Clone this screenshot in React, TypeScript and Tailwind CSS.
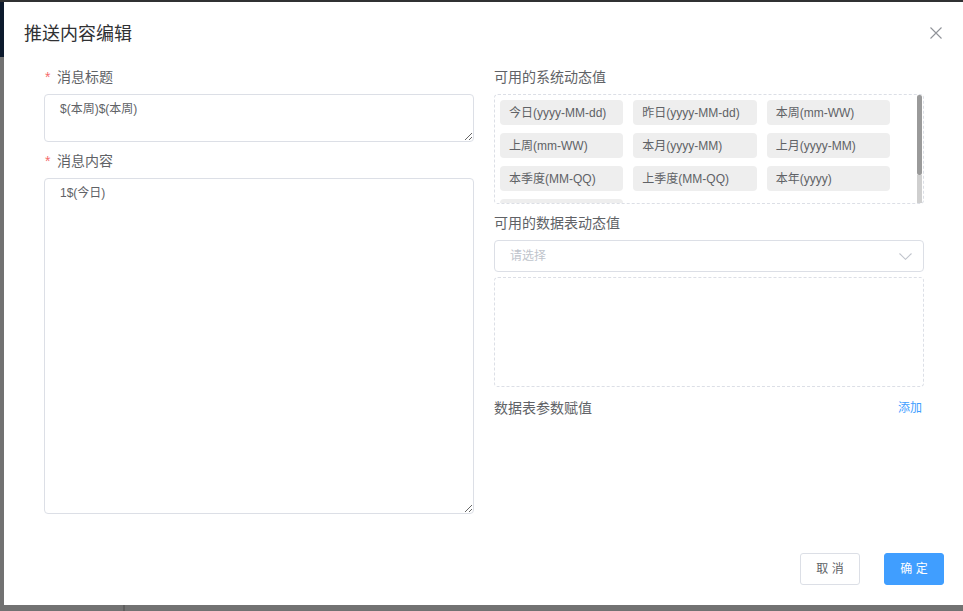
import React from "react";

const SYSTEM_VALUES = [
  "今日(yyyy-MM-dd)",
  "昨日(yyyy-MM-dd)",
  "本周(mm-WW)",
  "上周(mm-WW)",
  "本月(yyyy-MM)",
  "上月(yyyy-MM)",
  "本季度(MM-QQ)",
  "上季度(MM-QQ)",
  "本年(yyyy)",
  "上年(yyyy)",
];

function FieldLabel({ text, required }: { text: string; required?: boolean }) {
  return (
    <div className="flex h-[20px] items-center text-[14px] leading-[20px] text-[#606266]">
      {required && <span className="mr-[6px] w-[7px] pl-[1px] text-[#f56c6c]">*</span>}
      <span>{text}</span>
    </div>
  );
}

export default function App() {
  return (
    <div className="relative h-[611px] w-[963px] overflow-hidden bg-[#727272] font-['Liberation_Sans','Noto_Sans_CJK_SC',sans-serif]">
      {/* dimmed page behind the dialog */}
      <div className="absolute left-0 top-0 h-[2px] w-full bg-[#303133]" />
      <div className="absolute left-0 top-[2px] h-[55px] w-[4px] bg-[#0d1a2d]" />
      <div className="absolute left-[123px] top-[605px] h-[6px] w-[2px] bg-[#5f5f5f]" />

      <div className="absolute left-[4px] top-[2px] flex h-[603px] w-[959px] flex-col bg-white">
        <div className="flex items-start justify-between px-[20px] pt-[20px]">
          <h2 className="text-[18px] leading-[24px] text-[#303133]">推送内容编辑</h2>
          <svg width="12" height="12" viewBox="0 0 12 12" className="mr-[1px] mt-[5px]">
            <path d="M0.5 0.5 L11.5 11.5 M11.5 0.5 L0.5 11.5" stroke="#909399" strokeWidth="1.1" fill="none" />
          </svg>
        </div>

        <div className="grid grid-cols-2 gap-[20px] pl-[40px] pr-[39px] pt-[21px]">
          <div className="flex flex-col">
            <FieldLabel text="消息标题" required />
            <textarea
              readOnly
              defaultValue="$(本周)$(本周)"
              className="mt-[7px] h-[48px] w-full rounded-[4px] border border-[#dcdfe6] px-[15px] py-[5px] text-[12px] leading-[18px] text-[#606266] outline-none"
            />
            <div className="mt-[9px]">
              <FieldLabel text="消息内容" required />
            </div>
            <textarea
              readOnly
              defaultValue="1$(今日)"
              className="mt-[7px] h-[336px] w-full rounded-[4px] border border-[#dcdfe6] px-[15px] py-[5px] text-[12px] leading-[18px] text-[#606266] outline-none"
            />
          </div>

          <div className="flex flex-col">
            <FieldLabel text="可用的系统动态值" />
            <div className="mt-[7px] flex h-[110px] rounded-[4px] border border-dashed border-[#dcdfe6]">
              <div className="flex-1 overflow-hidden p-[5px]">
                <div className="grid w-[390px] grid-cols-3 gap-x-[10px] gap-y-[8px]">
                  {SYSTEM_VALUES.map((v) => (
                    <div
                      key={v}
                      className="flex h-[25px] items-center rounded-[4px] bg-[#eeeeee] pl-[9px] text-[12px] text-[#606266]"
                    >
                      {v}
                    </div>
                  ))}
                </div>
              </div>
              <div className="mr-[1px] flex w-[5px] flex-col">
                <div className="h-[80px] rounded-[2px] bg-[#9a9a9a]" />
                <div className="flex-1 bg-[#cfcfcf]" />
              </div>
            </div>

            <div className="mt-[9px]">
              <FieldLabel text="可用的数据表动态值" />
            </div>
            <div className="mt-[7px] flex h-[32px] items-center justify-between rounded-[4px] border border-[#dcdfe6] pl-[15px] pr-[11px]">
              <span className="text-[12px] text-[#c0c4cc]">请选择</span>
              <svg width="13" height="7" viewBox="0 0 13 7">
                <path d="M0.5 0.5 L6.5 6.3 L12.5 0.5" stroke="#c0c4cc" strokeWidth="1.1" fill="none" />
              </svg>
            </div>
            <div className="mt-[5px] h-[110px] rounded-[4px] border border-dashed border-[#dcdfe6]" />

            <div className="mt-[11px] flex h-[20px] items-center justify-between pr-[2px]">
              <span className="text-[14px] text-[#606266]">数据表参数赋值</span>
              <span className="text-[12px] text-[#409eff]">添加</span>
            </div>
          </div>
        </div>

        <div className="mt-auto flex justify-end gap-[24px] pb-[20px] pr-[19px]">
          <button className="h-[32px] w-[60px] rounded-[3px] border border-[#dcdfe6] bg-white text-[12px] text-[#606266]">
            取 消
          </button>
          <button className="h-[32px] w-[60px] rounded-[3px] border border-[#409eff] bg-[#409eff] text-[12px] text-white">
            确 定
          </button>
        </div>
      </div>
    </div>
  );
}
